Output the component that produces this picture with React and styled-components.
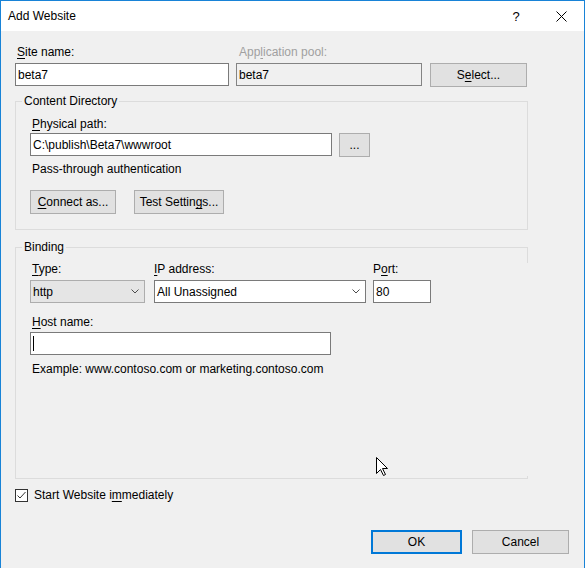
import React from 'react'
import styled, { createGlobalStyle } from 'styled-components'

const GlobalStyle = createGlobalStyle`
  body {
    margin: 0;
    background: #fff;
    font-family: "Liberation Sans", Arial, sans-serif;
    font-size: 12px;
    color: #000;
  }
`

const Window = styled.div`
  position: relative;
  width: 585px;
  height: 568px;
  box-sizing: border-box;
  border: 1px solid #1883d7;
  border-bottom: none;
  background: #f0f0f0;
  display: flex;
  flex-direction: column;
`

const TitleBar = styled.div`
  display: flex;
  align-items: center;
  height: 30px;
  padding-left: 7px;
  background: #fff;
`

const Title = styled.div`
  flex: 1;
  line-height: 30px;
`

const CaptionButton = styled.div`
  width: ${p => p.$w}px;
  height: 30px;
  display: flex;
  align-items: center;
  justify-content: center;
  font-size: 13px;
`

const Body = styled.div`
  display: flex;
  flex-direction: column;
  padding: 14px 15px 0 14px;
`

const Row = styled.div`
  display: flex;
  align-items: flex-start;
  margin-top: ${p => p.$mt || 0}px;
`

const Field = styled.div`
  display: flex;
  flex-direction: column;
  gap: ${p => p.$gap || 3}px;
  width: ${p => p.$w}px;
  margin-left: ${p => p.$ml || 0}px;
  margin-top: ${p => p.$mt || 0}px;
`

const Label = styled.div`
  line-height: 15px;
  padding-left: ${p => p.$pl || 0}px;
  color: ${p => (p.$disabled ? '#a0a0a0' : '#000')};
  white-space: nowrap;
`

const Key = styled.span`
  text-decoration: underline;
  text-underline-offset: 2px;
`

const TextBox = styled.div`
  display: flex;
  align-items: center;
  width: ${p => (p.$w ? `${p.$w}px` : 'auto')};
  height: 23px;
  box-sizing: border-box;
  padding: 0 2px;
  border: 1px solid ${p => (p.$disabled ? '#838383' : '#7a7a7a')};
  background: ${p => (p.$disabled ? '#f0f0f0' : '#fff')};
  white-space: nowrap;
`

const Caret = styled.span`
  width: 1px;
  height: 15px;
  background: #000;
`

const Combo = styled.div`
  display: flex;
  align-items: center;
  justify-content: space-between;
  height: 23px;
  box-sizing: border-box;
  padding: 0 5px 0 2px;
  border: 1px solid ${p => (p.$flat ? '#adadad' : '#7a7a7a')};
  background: ${p => (p.$flat ? '#e5e5e5' : '#fff')};
`

const Chevron = () => (
  <svg width="8" height="5" viewBox="0 0 8 5">
    <polyline points="0.5,0.5 4,4 7.5,0.5" fill="none" stroke="#4d4d4d" strokeWidth="1" />
  </svg>
)

const Button = styled.button`
  width: ${p => p.$w}px;
  height: 24px;
  margin: 0 0 0 ${p => p.$ml || 0}px;
  margin-top: ${p => p.$mt || 0}px;
  padding: 0;
  box-sizing: border-box;
  border: ${p => (p.$default ? '2px solid #0078d7' : '1px solid #adadad')};
  background: #e1e1e1;
  font: inherit;
  color: #000;
  flex: none;
`

const Group = styled.fieldset`
  position: relative;
  width: 513px;
  height: ${p => (p.$h ? `${p.$h}px` : 'auto')};
  margin: ${p => p.$mt}px 0 0;
  padding: 0 0 ${p => p.$pb || 0}px 14px;
  box-sizing: border-box;
  min-width: 0;
  border: 1px solid #dcdcdc;

  ${p => p.$openRight && `
    &::after {
      content: '';
      position: absolute;
      right: -1px;
      top: 8px;
      height: 213px;
      width: 1px;
      background: #f0f0f0;
    }
  `}
`

const Legend = styled.legend`
  margin-left: -8px;
  padding: 0 2px;
  line-height: 15px;
`

const Note = styled.div`
  line-height: 15px;
  padding-left: 2px;
  margin-top: ${p => p.$mt || 0}px;
`

const CheckRow = styled.div`
  display: flex;
  align-items: center;
  gap: 6px;
  margin-top: 9px;
  line-height: 15px;
`

const CheckBox = styled.div`
  width: 13px;
  height: 13px;
  box-sizing: border-box;
  border: 1px solid #333;
  background: #fff;
  display: flex;
  align-items: center;
  justify-content: center;
`

const Footer = styled.div`
  display: flex;
  justify-content: flex-end;
  gap: 10px;
  margin-top: 27px;
`

const Pointer = styled.svg`
  position: absolute;
  left: 375px;
  top: 456px;
`

const App = () => (
  <>
    <GlobalStyle />
    <Window>
      <TitleBar>
        <Title>Add Website</Title>
        <CaptionButton $w={46}>?</CaptionButton>
        <CaptionButton $w={45}>
          <svg width="11" height="11" viewBox="0 0 11 11">
            <path d="M0.5 0.5L10.5 10.5M10.5 0.5L0.5 10.5" stroke="#000" strokeWidth="1" />
          </svg>
        </CaptionButton>
      </TitleBar>

      <Body>
        <Row>
          <Field $w={214}>
            <Label $pl={2}><Key>S</Key>ite name:</Label>
            <TextBox>beta7</TextBox>
          </Field>
          <Field $w={186} $ml={7}>
            <Label $pl={3} $disabled>App<Key>l</Key>ication pool:</Label>
            <TextBox $disabled>beta7</TextBox>
          </Field>
          <Button $w={97} $ml={8} $mt={18}>S<Key>e</Key>lect...</Button>
        </Row>

        <Group $mt={7} $pb={15}>
          <Legend>Content Directory</Legend>
          <Field $mt={8} $gap={1}>
            <Label $pl={2}><Key>P</Key>hysical path:</Label>
            <Row>
              <TextBox $w={302}>C:\publish\Beta7\wwwroot</TextBox>
              <Button $w={31} $ml={7}>...</Button>
            </Row>
          </Field>
          <Note $mt={5}>Pass-through authentication</Note>
          <Row $mt={13}>
            <Button $w={86}><Key>C</Key>onnect as...</Button>
            <Button $w={90} $ml={18}>Test Settin<Key>g</Key>s...</Button>
          </Row>
        </Group>

        <Group $mt={10} $h={239} $openRight>
          <Legend>Binding</Legend>
          <Row $mt={7}>
            <Field $w={115}>
              <Label $pl={2}><Key>T</Key>ype:</Label>
              <Combo $flat>http<Chevron /></Combo>
            </Field>
            <Field $w={212} $ml={9}>
              <Label><Key>I</Key>P address:</Label>
              <Combo>All Unassigned<Chevron /></Combo>
            </Field>
            <Field $w={58} $ml={7}>
              <Label>P<Key>o</Key>rt:</Label>
              <TextBox>80</TextBox>
            </Field>
          </Row>
          <Field $w={301} $mt={12} $gap={2}>
            <Label $pl={2}><Key>H</Key>ost name:</Label>
            <TextBox><Caret /></TextBox>
          </Field>
          <Note $mt={7}>Example: www.contoso.com or marketing.contoso.com</Note>
        </Group>

        <CheckRow>
          <CheckBox>
            <svg width="11" height="11" viewBox="0 0 11 11">
              <polyline points="1.5,5.5 4,8 9.5,2" fill="none" stroke="#333" strokeWidth="1" />
            </svg>
          </CheckBox>
          <span>Start Website i<Key>m</Key>mediately</span>
        </CheckRow>

        <Footer>
          <Button $w={91} $default>OK</Button>
          <Button $w={97}>Cancel</Button>
        </Footer>
      </Body>

      <Pointer width="13" height="20" viewBox="0 0 13 20">
        <polygon
          points="0.5,0.5 0.5,16.5 4.5,12.5 7.5,18.5 9.5,17.5 6.5,11.5 11.5,11.5"
          fill="#fff"
          stroke="#000"
          strokeWidth="1"
        />
      </Pointer>
    </Window>
  </>
)

export default App
